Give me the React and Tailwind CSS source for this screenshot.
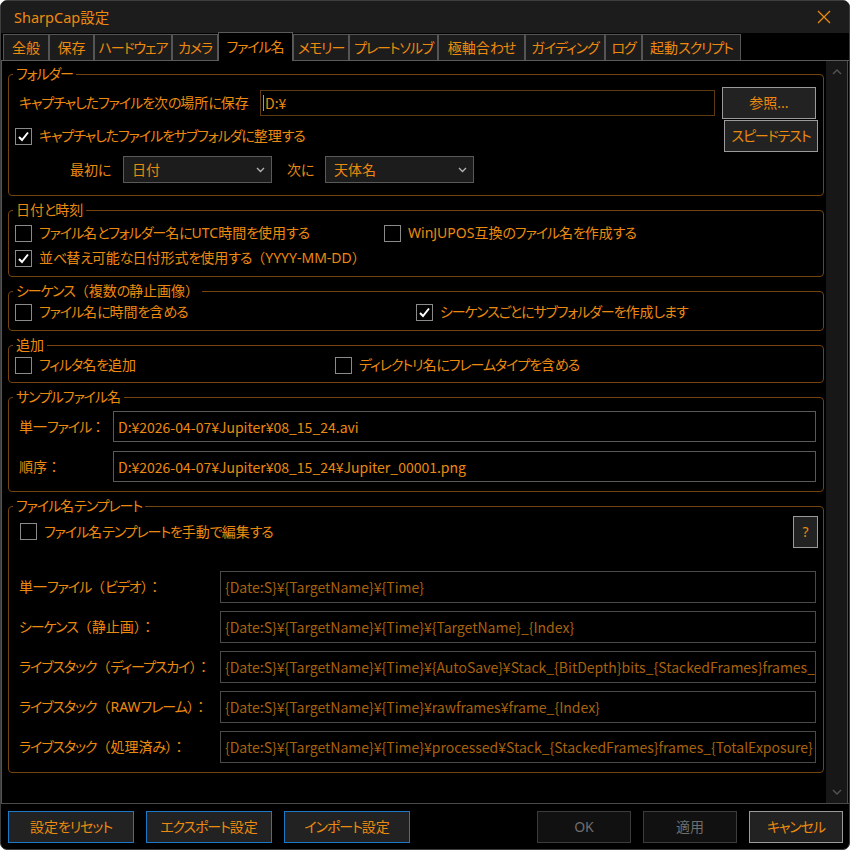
import React from 'react';

const tabs = [
  { label: '全般', w: 'w-[46px]' },
  { label: '保存', w: 'w-[45px]' },
  { label: 'ハードウェア', w: 'w-[78px]' },
  { label: 'カメラ', w: 'w-[46px]' },
  { label: 'ファイル名', w: 'w-[75px]', active: true },
  { label: 'メモリー', w: 'w-[56px]' },
  { label: 'プレートソルブ', w: 'w-[89px]' },
  { label: '極軸合わせ', w: 'w-[87px]' },
  { label: 'ガイディング', w: 'w-[80px]' },
  { label: 'ログ', w: 'w-[37px]' },
  { label: '起動スクリプト', w: 'w-[99px]' },
];

const templates = [
  ['単一ファイル（ビデオ）：', '{Date:S}¥{TargetName}¥{Time}'],
  ['シーケンス（静止画）：', '{Date:S}¥{TargetName}¥{Time}¥{TargetName}_{Index}'],
  ['ライブスタック（ディープスカイ）：', '{Date:S}¥{TargetName}¥{Time}¥{AutoSave}¥Stack_{BitDepth}bits_{StackedFrames}frames_{TotalExposure}'],
  ['ライブスタック（RAWフレーム）：', '{Date:S}¥{TargetName}¥{Time}¥rawframes¥frame_{Index}'],
  ['ライブスタック（処理済み）：', '{Date:S}¥{TargetName}¥{Time}¥processed¥Stack_{StackedFrames}frames_{TotalExposure}'],
];

// kana runs are set a bit tighter, full-width brackets/colons keep full width
function J({ text }) {
  return text.split(/([\u3041-\u30ff]+|[（）：])/).map((p, i) => {
    if (!p) return null;
    if (/^[（）：]$/.test(p)) return <span key={i} className="[font-feature-settings:normal]">{p}</span>;
    if (/^[\u3041-\u30ff]+$/.test(p)) return <span key={i} className="tracking-[-1.1px]">{p}</span>;
    return <React.Fragment key={i}>{p}</React.Fragment>;
  });
}

function Check({ checked }) {
  return (
    <span className="w-[17px] h-[17px] border border-[#8a8a8a] bg-black flex items-center justify-center shrink-0">
      {checked && (
        <svg width="13" height="13" viewBox="0 0 13 13">
          <path d="M2 7 L5 10 L11 2.5" fill="none" stroke="#ffffff" strokeWidth="2" />
        </svg>
      )}
    </span>
  );
}

function CheckRow({ checked, label, className = '' }) {
  return (
    <div className={`flex items-center gap-[7px] ${className}`}>
      <Check checked={checked} />
      <span className="whitespace-nowrap"><J text={label} /></span>
    </div>
  );
}

function Group({ title, className = '', children }) {
  return (
    <fieldset className={`border border-[#74430f] rounded-[4px] ml-[6px] mr-[2px] min-w-0 ${className}`}>
      <legend className="ml-[4px] px-[3px] leading-[20px]"><J text={title} /></legend>
      {children}
    </fieldset>
  );
}

function Select({ value }) {
  return (
    <div className="w-[149px] h-[27px] bg-[#1c1c1c] border border-[#595959] flex items-center justify-between pl-[8px] pr-[6px]">
      <span>{value}</span>
      <svg width="9" height="6" viewBox="0 0 9 6">
        <path d="M1 1 L4.5 4.5 L8 1" fill="none" stroke="#b5b5b5" strokeWidth="1.3" />
      </svg>
    </div>
  );
}

function Btn({ children, className = '' }) {
  return (
    <div className={`h-[32px] flex items-center justify-center border whitespace-nowrap ${className}`}>{children}</div>
  );
}

const mono = "font-['Noto_Sans_CJK_JP',sans-serif] text-[14px]";

export default function App() {
  return (
    <div className="w-[850px] h-[850px] bg-black text-[#ec8a10] text-[14px] leading-[20px] font-['Noto_Sans','Noto_Sans_CJK_JP',sans-serif] [font-feature-settings:'palt'] flex flex-col border border-[#3e3e3e] rounded-[7px] overflow-hidden">
      {/* title bar */}
      <div className="h-[32px] shrink-0 bg-[#1c1c1c] flex items-center justify-between pl-[13px] pr-[18px]">
        <span className="text-[14.5px]">SharpCap設定</span>
        <svg width="14" height="14" viewBox="0 0 14 14">
          <path d="M1 1 L13 13 M13 1 L1 13" stroke="#ec8a10" strokeWidth="1.3" />
        </svg>
      </div>

      {/* tabs */}
      <div className="h-[28px] shrink-0 flex items-end pl-[2px] border-b border-[#5a5a5a]">
        {tabs.map(t =>
          t.active ? (
            <div
              key={t.label}
              className={`${t.w} h-[29px] -mb-px bg-black border border-b-0 border-[#5a5a5a] flex items-center justify-center whitespace-nowrap`}
            >
              <J text={t.label} />
            </div>
          ) : (
            <div
              key={t.label}
              className={`${t.w} h-[26px] bg-[#1c1c1c] border border-b-0 border-[#555] flex items-center justify-center whitespace-nowrap`}
            >
              <J text={t.label} />
            </div>
          )
        )}
      </div>

      {/* content */}
      <div className="flex-1 flex border-l border-[#555] min-h-0">
        <div className="flex-1 flex flex-col gap-[4px] pt-[3px]">
          <Group title="フォルダー" className="h-[132px]">
            <div className="pt-[6px]">
              <div className="h-[26px] flex items-center pl-[10px] pr-[5px]">
                <span className="w-[241px] whitespace-nowrap"><J text="キャプチャしたファイルを次の場所に保存" /></span>
                <div className={`w-[455px] h-[26px] border border-[#5e3a10] flex items-center pl-[2px] ${mono}`}>
                  <span className="w-px h-[16px] bg-[#ec8a10] mr-[1px]"></span>
                  <span>D:¥</span>
                </div>
                <Btn className="w-[94px] ml-[7px] h-[26px] bg-[#222] border-[#9a9a9a]">参照...</Btn>
              </div>
              <div className="h-[26px] mt-[7px] flex items-center pl-[6px] pr-[5px]">
                <CheckRow checked label="キャプチャしたファイルをサブフォルダに整理する" />
                <Btn className="w-[94px] ml-auto h-[26px] bg-[#222] border-[#9a9a9a]"><J text="スピードテスト" /></Btn>
              </div>
              <div className="h-[27px] mt-[7px] flex items-center pl-[61px]">
                <span className="w-[53px]">最初に</span>
                <Select value="日付" />
                <span className="w-[38px] ml-[15px]">次に</span>
                <Select value="天体名" />
              </div>
            </div>
          </Group>

          <Group title="日付と時刻" className="h-[77px]">
            <div className="pt-[3px] pl-[6px]">
              <div className="h-[20px] flex items-center">
                <CheckRow label="ファイル名とフォルダー名にUTC時間を使用する" className="w-[369px]" />
                <CheckRow label="WinJUPOS互換のファイル名を作成する" />
              </div>
              <div className="h-[20px] mt-[5px] flex items-center">
                <CheckRow checked label="並べ替え可能な日付形式を使用する（YYYY-MM-DD）" />
              </div>
            </div>
          </Group>

          <Group title="シーケンス（複数の静止画像）" className="h-[50px]">
            <div className="pt-[1px] pl-[6px] h-[21px] flex items-center">
              <CheckRow label="ファイル名に時間を含める" className="w-[401px]" />
              <CheckRow checked label="シーケンスごとにサブフォルダーを作成します" />
            </div>
          </Group>

          <Group title="追加" className="h-[48px]">
            <div className="pl-[6px] h-[20px] flex items-center">
              <CheckRow label="フィルタ名を追加" className="w-[320px]" />
              <CheckRow label="ディレクトリ名にフレームタイプを含める" />
            </div>
          </Group>

          <Group title="サンプルファイル名" className="h-[105px]">
            <div className="pt-[4px] pl-[10px] flex flex-col gap-[9px]">
              {[
                ['単一ファイル：', 'D:¥2026-04-07¥Jupiter¥08_15_24.avi'],
                ['順序：', 'D:¥2026-04-07¥Jupiter¥08_15_24¥Jupiter_00001.png'],
              ].map(([l, v]) => (
                <div key={l} className="h-[31px] flex items-center">
                  <span className="w-[94px] whitespace-nowrap"><J text={l} /></span>
                  <div className={`w-[703px] h-[31px] border border-[#595959] flex items-center pl-[4px] ${mono}`}>{v}</div>
                </div>
              ))}
            </div>
          </Group>

          <Group title="ファイル名テンプレート" className="h-[277px]">
            <div className="pt-[3px]">
              <div className="h-[25px] flex items-center pl-[11px] pr-[5px]">
                <CheckRow label="ファイル名テンプレートを手動で編集する" />
                <Btn className="w-[25px] h-[25px] ml-auto bg-[#222] border-[#9a9a9a]">?</Btn>
              </div>
              <div className="mt-[27px] flex flex-col gap-[8px] pl-[10px]">
                {templates.map(([l, v]) => (
                  <div key={l} className="h-[32px] flex items-center">
                    <span className="w-[201px] whitespace-nowrap"><J text={l} /></span>
                    <div className={`w-[596px] h-[32px] border border-[#4a4a4a] flex items-center pl-[4px] overflow-hidden whitespace-nowrap text-[#a9620e] ${mono}`}>
                      {v}
                    </div>
                  </div>
                ))}
              </div>
            </div>
          </Group>
        </div>

        {/* scrollbar */}
        <div className="w-[22px] bg-[#171717] border-r border-[#4a4a4a] flex flex-col items-center justify-between py-[8px] mr-[1px]">
          <svg width="10" height="6" viewBox="0 0 10 6">
            <path d="M1 5 L5 1 L9 5" fill="none" stroke="#555" strokeWidth="1.3" />
          </svg>
          <svg width="10" height="6" viewBox="0 0 10 6">
            <path d="M1 1 L5 5 L9 1" fill="none" stroke="#555" strokeWidth="1.3" />
          </svg>
        </div>
      </div>

      {/* footer */}
      <div className="h-[46px] shrink-0 border-t border-[#4a4a4a] flex items-start pt-[7px] pl-[7px] pr-[6px]">
        <Btn className="w-[126px] bg-[#222] border-[#1e78c8]"><J text="設定をリセット" /></Btn>
        <Btn className="w-[126px] ml-[12px] bg-[#222] border-[#1e78c8]"><J text="エクスポート設定" /></Btn>
        <Btn className="w-[126px] ml-[12px] bg-[#222] border-[#1e78c8]"><J text="インポート設定" /></Btn>
        <Btn className="w-[94px] ml-auto bg-[#111] border-[#3c3c3c] text-[#6e6e6e]">OK</Btn>
        <Btn className="w-[94px] ml-[12px] bg-[#111] border-[#3c3c3c] text-[#6e6e6e]">適用</Btn>
        <Btn className="w-[94px] ml-[12px] bg-[#222] border-[#9a9a9a]"><J text="キャンセル" /></Btn>
      </div>
    </div>
  );
}
